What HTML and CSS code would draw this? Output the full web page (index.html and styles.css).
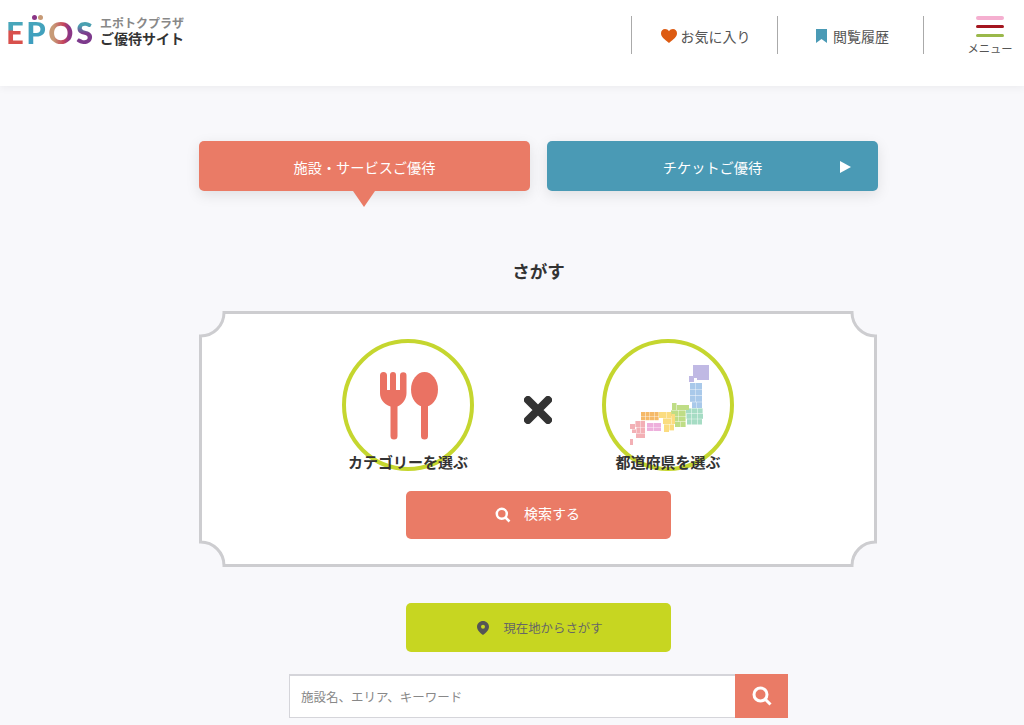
FILE: index.html
```html
<!DOCTYPE html>
<html lang="ja">
<head>
    <meta charset="UTF-8">
    <meta name="viewport" content="width=device-width, initial-scale=1.0">
    <title>エポトクプラザ ご優待サイト</title>
    <link rel="stylesheet" href="styles.css">
</head>
<body>
    <header class="site-header">
        <a class="logo">
            <span class="logo-mark">
                <span class="logo-dots"><i></i><i></i></span>
                <span class="l-e">E</span><span class="l-p">P</span><span class="l-o">O</span><span class="l-s">S</span>
            </span>
            <span class="logo-text">
                <small>エポトクプラザ</small>
                <b>ご優待サイト</b>
            </span>
        </a>
        <nav class="header-nav">
            <a class="nav-item">
                <svg class="icon-heart" viewBox="0 0 16 14"><path d="M8 14C3 10 0 7.600 0 4.200 0 1.800 1.800 0 4 0c1.700 0 3.100.8 4 2.200C8.900.8 10.300 0 12 0c2.200 0 4 1.800 4 4.200C16 7.600 13 10 8 14z"/></svg>
                お気に入り
            </a>
            <a class="nav-item">
                <svg class="icon-mark" viewBox="0 0 11 14"><path d="M0 0h11v14L5.500 10 0 14z"/></svg>
                閲覧履歴
            </a>
            <a class="menu-btn">
                <span class="bar bar-pink"></span>
                <span class="bar bar-red"></span>
                <span class="bar bar-green"></span>
                <span class="menu-label">メニュー</span>
            </a>
        </nav>
    </header>

    <main class="content">
        <div class="tabs">
            <a class="tab tab-active">施設・サービスご優待</a>
            <a class="tab tab-ticket">チケットご優待<span class="tab-arrow"></span></a>
        </div>

        <h2 class="title">さがす</h2>

        <section class="ticket">
            <svg class="ticket-frame" viewBox="0 0 678 256">
                <path d="M25 1.500H653A23.500 23.500 0 0 0 676.500 25V231A23.500 23.500 0 0 0 653 254.500H25A23.500 23.500 0 0 0 1.500 231V25A23.500 23.500 0 0 0 25 1.500z"/>
            </svg>
            <div class="picks">
                <a class="pick">
                    <span class="pick-circle">
                        <svg viewBox="342 339 132 132">
                            <path class="cutlery" d="M380 375.500a3.500 3.500 0 0 1 7 0V390h3V375a3 3 0 0 1 6 0V390h4V375.500a3.250 3.250 0 0 1 6.500 0V393c0 6-3.500 11-9 13.500V436a3.500 3.500 0 0 1-7 0V406.500C383.500 404 380 399 380 393z"/>
                            <ellipse class="cutlery" cx="424.500" cy="389.500" rx="13.500" ry="17.500"/>
                            <path class="cutlery" d="M421 400h7v36a3.500 3.500 0 0 1-7 0z"/>
                        </svg>
                    </span>
                    <span class="pick-label">カテゴリーを選ぶ</span>
                </a>
                <svg class="times" viewBox="0 0 28 28"><path d="M4 4l20 20M24 4L4 24"/></svg>
                <a class="pick">
                    <span class="pick-circle">
                        <svg viewBox="601 339 132 132">
                            <path fill="#c0b9e4" d="M692 365h16v15h-12v-2h-3v4h-5v-6h4z"/>
                            <g fill="#a9c9ea">
                                <rect x="689" y="383" width="5.600" height="6"/><rect x="695" y="383" width="6" height="6"/>
                                <rect x="689" y="389.400" width="5.600" height="6"/><rect x="695" y="389.400" width="6" height="6"/>
                                <rect x="689" y="395.800" width="5.600" height="6"/><rect x="695" y="395.800" width="6" height="6"/>
                                <rect x="691" y="402.200" width="4.600" height="5.800"/><rect x="696" y="402.200" width="5" height="5.800"/>
                            </g>
                            <g fill="#a6dcc4">
                                <rect x="685" y="408.400" width="5.400" height="5"/><rect x="690.800" y="408.400" width="5.400" height="5"/><rect x="696.600" y="408.400" width="5" height="5"/>
                                <rect x="685.500" y="413.800" width="4.900" height="5"/><rect x="690.800" y="413.800" width="5.400" height="5"/><rect x="696.600" y="413.800" width="5.400" height="5"/>
                                <rect x="686" y="419.200" width="4.400" height="5.300"/><rect x="690.800" y="419.200" width="5.400" height="5.300"/><rect x="696.600" y="419.200" width="4.400" height="5.300"/>
                            </g>
                            <g fill="#bfdd86">
                                <rect x="671" y="403" width="4.500" height="7"/><rect x="675.900" y="405" width="12.100" height="5"/>
                                <rect x="670" y="410.400" width="7" height="5.600"/><rect x="677.400" y="410.400" width="7.200" height="5.600"/>
                                <rect x="671" y="416.400" width="6" height="5"/><rect x="677.400" y="416.400" width="7.200" height="5"/>
                                <rect x="674" y="421.800" width="5" height="5.200"/><rect x="679.400" y="421.800" width="5.200" height="5.200"/>
                            </g>
                            <g fill="#fbdc80">
                                <rect x="658" y="412" width="7" height="6"/><rect x="665.400" y="412" width="5" height="6"/>
                                <rect x="662" y="418.400" width="8" height="5.600"/><rect x="670.400" y="414" width="3.600" height="10"/>
                                <rect x="663" y="424.400" width="5" height="7.600"/><rect x="668.400" y="424.400" width="4.600" height="6"/>
                            </g>
                            <g fill="#f5b968">
                                <rect x="640" y="412" width="4.200" height="4"/><rect x="644.600" y="412" width="4" height="4"/><rect x="649" y="412" width="4" height="4"/><rect x="653.400" y="412" width="4.200" height="4"/>
                                <rect x="640" y="416.400" width="4.200" height="3.800"/><rect x="644.600" y="416.400" width="4" height="3.800"/><rect x="649" y="416.400" width="4" height="3.800"/><rect x="653.400" y="416.400" width="4.200" height="3.800"/>
                            </g>
                            <g fill="#eeb0dc">
                                <rect x="646" y="423" width="6.200" height="4"/><rect x="652.600" y="423" width="7.400" height="4"/>
                                <rect x="646" y="427.400" width="6.200" height="3.600"/><rect x="652.600" y="427.400" width="7.400" height="3.600"/>
                            </g>
                            <g fill="#f3b0b5">
                                <rect x="629" y="424" width="5" height="5"/><rect x="634.400" y="421" width="4.600" height="6"/><rect x="639.400" y="421" width="4.600" height="6"/>
                                <rect x="631" y="429.400" width="4" height="3.600"/><rect x="635.400" y="427.400" width="4" height="5.600"/><rect x="639.800" y="427.400" width="4.200" height="5.600"/>
                                <rect x="635" y="433.400" width="9" height="4.600"/>
                                <rect x="629" y="439" width="3" height="6"/>
                            </g>
                        </svg>
                    </span>
                    <span class="pick-label">都道府県を選ぶ</span>
                </a>
            </div>
            <a class="btn btn-search">
                <svg class="icon-search" viewBox="0 0 16 16"><circle cx="6.800" cy="6.800" r="5"/><path d="M10.500 10.500L14.500 14.500"/></svg>
                <span class="btn-text">検索する</span>
            </a>
        </section>

        <a class="btn btn-here">
            <svg class="icon-pin" viewBox="0 0 12 14"><path fill-rule="evenodd" d="M6 0c3.300 0 6 2.500 6 5.700C12 9.300 8.500 12 6 14 3.500 12 0 9.300 0 5.700 0 2.500 2.700 0 6 0zm0 3.800a2 2 0 1 0 0 4 2 2 0 0 0 0-4z"/></svg>
            現在地からさがす
        </a>

        <form class="keyword">
            <input class="keyword-input" type="text" placeholder="施設名、エリア、キーワード">
            <button class="keyword-btn" type="button">
                <svg class="icon-search-lg" viewBox="0 0 20 20"><circle cx="8.500" cy="8.500" r="6.500"/><path d="M13.500 13.500L18.500 18.500"/></svg>
            </button>
        </form>
    </main>
</body>
</html>
```

FILE: styles.css
```css
* {
    box-sizing: border-box;
}
body {
    margin: 0;
    background-color: #f8f8fb;
    color: #333;
    font-family: "Noto Sans CJK JP", "Noto Sans", sans-serif;
}

/* header */
.site-header {
    display: flex;
    justify-content: space-between;
    height: 86px;
    background: white;
    box-shadow: 0 2px 8px rgba(0, 0, 0, 0.05);
}
.logo {
    display: flex;
    align-items: flex-start;
    gap: 6px;
    padding: 14px 0 0 6px;
}
.logo-mark {
    position: relative;
    display: flex;
    width: 88px;
    padding-top: 2px;
    font-family: "Lato", sans-serif;
    font-size: 31px;
    font-weight: 900;
    line-height: 32px;
    letter-spacing: 2.500px;
}
.logo-mark span {
    -webkit-background-clip: text;
    background-clip: text;
    color: transparent;
}
.l-e {
    background-image: linear-gradient(#48a6ba 42%, #d8504c 48%);
}
.l-p {
    background-image: linear-gradient(#48a6ba, #3b9cc0);
}
.l-o {
    background-image: linear-gradient(90deg, #c79a76 20%, #c6455c 55%, #8a3586 75%);
}
.l-s {
    background-image: linear-gradient(#4aa0b0 30%, #7d3a8c 55%);
}
.logo-dots {
    position: absolute;
    top: 1px;
    left: 26px;
    display: flex;
    gap: 1px;
}
.logo-dots i {
    width: 5px;
    height: 5px;
    border-radius: 50%;
    background: #8a3586;
}
.logo-dots i + i {
    background: #c79a76;
}
.logo-text {
    display: flex;
    flex-direction: column;
    padding-top: 1px;
}
.logo-text small {
    color: #888;
    font-size: 12px;
    font-weight: 700;
    line-height: 15px;
    white-space: nowrap;
}
.logo-text b {
    font-size: 14px;
    line-height: 17px;
    white-space: nowrap;
}
.header-nav {
    display: flex;
    align-items: flex-start;
    padding-top: 16px;
}
.nav-item {
    display: flex;
    justify-content: center;
    align-items: center;
    gap: 4px;
    width: 146px;
    height: 38px;
    border-left: 1px solid #aaa;
    padding: 1px 0 0 2px;
    color: #555;
    font-size: 14px;
}
.icon-heart {
    width: 16px;
    height: 14px;
    fill: #dd5b12;
}
.icon-mark {
    width: 11px;
    height: 14px;
    margin: 0 2px;
    fill: #4a9ab5;
}
.menu-btn {
    display: flex;
    flex-direction: column;
    align-items: center;
    width: 101px;
    height: 38px;
    border-left: 1px solid #aaa;
    padding-left: 32px;
}
.bar {
    flex-shrink: 0;
    width: 28px;
    height: 3.500px;
    margin-bottom: 5.300px;
    border-radius: 2px;
}
.bar-pink {
    background: #f5afd0;
}
.bar-red {
    background: #a4161f;
}
.bar-green {
    background: #9ab84a;
}
.menu-label {
    flex-shrink: 0;
    margin-top: -2px;
    color: #555;
    font-size: 11.300px;
    line-height: 16px;
    white-space: nowrap;
}

/* main column */
.content {
    width: 679px;
    margin-left: 199px;
    padding: 55px 0 7px;
}
.tabs {
    display: flex;
    gap: 17px;
}
.tab {
    position: relative;
    display: flex;
    justify-content: center;
    align-items: center;
    width: 331px;
    height: 50px;
    border-radius: 5px;
    padding-top: 1px;
    color: white;
    font-size: 14.200px;
    box-shadow: 0 4px 14px rgba(0, 0, 0, 0.1);
}
.tab-active {
    background: #ea7b66;
}
.tab-active::after {
    content: "";
    position: absolute;
    top: 100%;
    left: 154px;
    border-top: 16px solid #ea7b66;
    border-left: 11px solid transparent;
    border-right: 11px solid transparent;
}
.tab-ticket {
    background: #4a9ab5;
}
.tab-arrow {
    position: absolute;
    top: 20px;
    right: 27px;
    border-left: 11px solid white;
    border-top: 6px solid transparent;
    border-bottom: 6px solid transparent;
}
.title {
    margin: 68px 0 28px;
    font-size: 17.500px;
    font-weight: 700;
    line-height: 24px;
    text-align: center;
}

/* ticket shaped box */
.ticket {
    position: relative;
    display: flex;
    flex-direction: column;
    align-items: center;
    width: 678px;
    height: 256px;
    padding-top: 28px;
}
.ticket-frame {
    position: absolute;
    top: 0;
    left: 0;
    width: 678px;
    height: 256px;
}
.ticket-frame path {
    fill: white;
    stroke: #cdcdd0;
    stroke-width: 3;
}
.picks {
    position: relative;
    display: flex;
    align-items: flex-start;
    gap: 50px;
}
.pick {
    display: flex;
    flex-direction: column;
    align-items: center;
    width: 132px;
}
.pick-circle {
    display: block;
    width: 132px;
    height: 132px;
    border: 4.500px solid #c5d62f;
    border-radius: 50%;
}
.pick-circle svg {
    display: block;
    width: 132px;
    height: 132px;
    margin: -4.500px;
}
.cutlery {
    fill: #ea7263;
}
.pick-label {
    margin-top: -18px;
    font-size: 15px;
    font-weight: 700;
    line-height: 18px;
    white-space: nowrap;
}
.times {
    width: 28px;
    height: 28px;
    margin-top: 57px;
    fill: none;
    stroke: #333;
    stroke-width: 8;
    stroke-linecap: round;
}
.btn {
    position: relative;
    display: flex;
    justify-content: center;
    align-items: center;
    width: 265px;
    border-radius: 5px;
}
.btn-search {
    align-self: flex-start;
    gap: 13px;
    height: 48px;
    margin: 20px 0 0 207px;
    padding-right: 2px;
    background: #ea7b66;
    color: white;
    font-size: 14px;
}
.btn-text {
    margin-bottom: 4px;
}
.icon-search {
    width: 16px;
    height: 16px;
    fill: none;
    stroke: white;
    stroke-width: 2.500;
}
.btn-here {
    gap: 14px;
    height: 49px;
    margin: 36px 0 22px 207px;
    padding-left: 3px;
    background: #c7d621;
    color: #666;
    font-size: 12.400px;
}
.icon-pin {
    width: 12px;
    height: 14px;
    fill: #555;
}

/* keyword search */
.keyword {
    display: flex;
    width: 499px;
    height: 44px;
    margin-left: 90px;
}
.keyword-input {
    flex: 1;
    min-width: 0;
    border: 1px solid #d5d5da;
    border-top-width: 2px;
    border-right: none;
    padding: 0 11px;
    background: white;
    font-family: inherit;
    font-size: 12.500px;
    border-radius: 0;
}
.keyword-input::placeholder {
    color: #888;
}
.keyword-btn {
    display: flex;
    justify-content: center;
    align-items: center;
    width: 53px;
    border: none;
    padding: 0;
    background: #ea7b66;
}
.icon-search-lg {
    width: 20px;
    height: 20px;
    fill: none;
    stroke: white;
    stroke-width: 3;
}
```
